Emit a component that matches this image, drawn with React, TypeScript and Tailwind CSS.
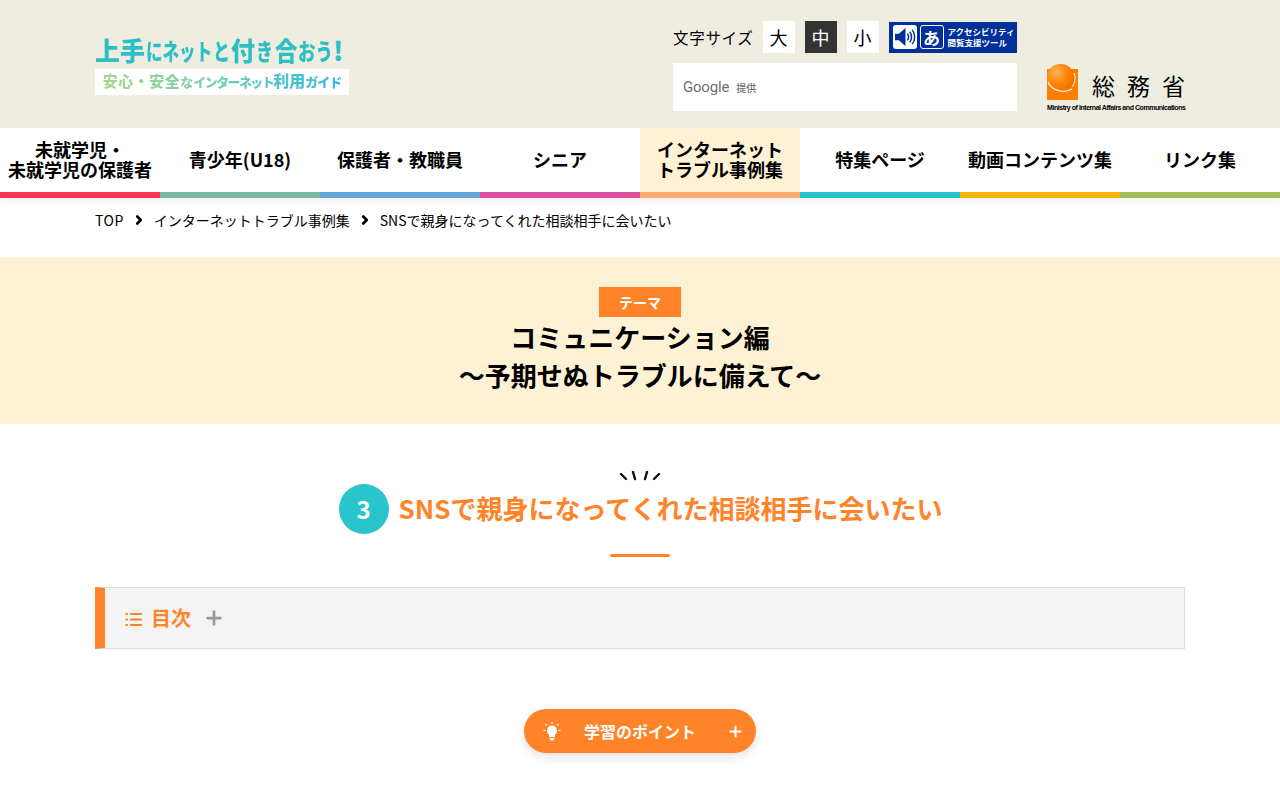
import React from 'react';
import { ChevronRight, Plus } from 'lucide-react';

const navItems = [
  { label: ['未就学児・', '未就学児の保護者'], border: 'border-[#ff3355]', bg: 'bg-white' },
  { label: ['青少年(U18)'], border: 'border-[#78b9a4]', bg: 'bg-white' },
  { label: ['保護者・教職員'], border: 'border-[#63a6dc]', bg: 'bg-white' },
  { label: ['シニア'], border: 'border-[#dc4f9d]', bg: 'bg-white' },
  { label: ['インターネット', 'トラブル事例集'], border: 'border-[#ffab6b]', bg: 'bg-[#fff1d3]' },
  { label: ['特集ページ'], border: 'border-[#27c3cb]', bg: 'bg-white' },
  { label: ['動画コンテンツ集'], border: 'border-[#f6b500]', bg: 'bg-white' },
  { label: ['リンク集'], border: 'border-[#9fbf5a]', bg: 'bg-white' },
];

// the logo lettering is condensed, so each run is squeezed into a set width
const Squeezed = ({ box, inner, children }: { box: string; inner: string; children: React.ReactNode }) => (
  <span className={`inline-block shrink-0 ${box}`}>
    <span className={`inline-block origin-left whitespace-nowrap ${inner}`}>{children}</span>
  </span>
);

const Logo = () => (
  <div className="w-[254px] mt-[6px]">
    <div className="h-[32px] mb-[3px] leading-[32px] font-black text-[#2cc0c6] flex">
      <Squeezed box="w-[51px]" inner="text-[26px] scale-x-[0.96]">上手</Squeezed>
      <Squeezed box="w-[67px]" inner="text-[23px] scale-x-[0.72]">にネット</Squeezed>
      <Squeezed box="w-[18px]" inner="text-[23px] scale-x-[0.74]">と</Squeezed>
      <Squeezed box="w-[25px]" inner="text-[26px] scale-x-[0.92]">付</Squeezed>
      <Squeezed box="w-[19px]" inner="text-[23px] scale-x-[0.74]">き</Squeezed>
      <Squeezed box="w-[23px]" inner="text-[26px] scale-x-[0.86]">合</Squeezed>
      <Squeezed box="w-[35px]" inner="text-[23px] scale-x-[0.76]">おう</Squeezed>
      <Squeezed box="w-[9px]" inner="text-[26px]">!</Squeezed>
    </div>
    <div className="h-[26px] bg-white leading-[23px] font-black text-center whitespace-nowrap">
      <span className="bg-gradient-to-r from-[#a8d68e] via-[#6fcdb0] to-[#2fb6e8] bg-clip-text text-transparent">
        <span className="text-[15px] tracking-[0.5px]">安心・安全</span>
        <span className="text-[13px]">な</span>
        <span className="text-[13px] tracking-[-1.6px]">インターネット</span>
        <span className="text-[16px]">利用</span>
        <span className="text-[13px] tracking-[-1px]">ガイド</span>
      </span>
    </div>
  </div>
);

const SizeButton = ({ label, active }: { label: string; active?: boolean }) => (
  <div className={`w-8 h-8 flex items-center justify-center text-lg ${active ? 'bg-[#333333] text-white' : 'bg-white text-black'}`}>
    {label}
  </div>
);

const AccessibilityBadge = () => (
  <div className="ml-[10px] w-[128px] h-[31px] bg-[#00309a] flex items-center gap-[3px] pl-[4px]">
    <div className="w-[24px] h-[24px] bg-white rounded-[3px] flex items-center justify-center">
      <svg width="22" height="20" viewBox="0 0 23 21">
        <path d="M1 7h4l7-6v19l-7-6H1z" fill="#00309a" />
        <path d="M14 7c1.500 2 1.500 5 0 7M16.500 5c2.500 3 2.500 8 0 11M19 3c3.500 4 3.500 11 0 15" fill="none" stroke="#00309a" strokeWidth="1.500" />
      </svg>
    </div>
    <div className="w-[24px] h-[24px] border-[1.5px] border-white rounded-[3px] flex items-center justify-center text-white text-[17px] leading-none font-bold">
      あ
    </div>
    <div className="ml-[1px] text-white text-[8.500px] leading-[11px] font-bold whitespace-nowrap">
      アクセシビリティ
      <br />
      閲覧支援ツール
    </div>
  </div>
);

const SearchBox = () => (
  <div className="mt-[10px] w-[344px] h-[48px] bg-white flex items-center pl-[10px] gap-[7px]">
    <span className="text-[#6f6f6f] text-[15px] tracking-[-0.2px] font-['Roboto',sans-serif]">Google</span>
    <span className="text-[#6f6f6f] text-[10px] font-medium">提供</span>
  </div>
);

const MinistryLogo = () => (
  <div className="w-[138px] mt-[64px]">
    <div className="flex items-start h-[39px]">
      <svg width="32" height="37" viewBox="0 0 32 37" className="shrink-0">
        <defs>
          <radialGradient id="ministryBall" cx="0.35" cy="0.3" r="0.75">
            <stop offset="0" stopColor="#ffb45a" />
            <stop offset="0.6" stopColor="#ff8000" />
            <stop offset="1" stopColor="#ee7000" />
          </radialGradient>
        </defs>
        <rect x="0" y="5" width="31" height="31" fill="#ff8000" />
        <circle cx="13.500" cy="14" r="14" fill="url(#ministryBall)" />
        <path d="M1 18c3 8 15 12 24 7" fill="none" stroke="#fff" strokeWidth="1.200" />
        <path d="M27 9c2 5 1 10-2 14" fill="none" stroke="#fff" strokeWidth="1" />
      </svg>
      <div className="ml-[13px] mt-[7px] text-[23px] leading-[28px] tracking-[12px] text-black whitespace-nowrap">総務省</div>
    </div>
    <div className="text-[7px] leading-[9px] font-bold text-black whitespace-nowrap tracking-[-0.45px] font-['Liberation_Sans',sans-serif]">
      Ministry of Internal Affairs and Communications
    </div>
  </div>
);

const Header = () => (
  <header className="h-[128px] bg-[#efece0] px-[95px] flex">
    <div className="pt-[28px]">
      <Logo />
    </div>
    <div className="ml-[324px] mt-[21px] w-[344px]">
      <div className="flex items-center">
        <span className="pt-[2px] text-[15.500px] tracking-[0.7px] text-black mr-[9px] whitespace-nowrap">文字サイズ</span>
        <div className="flex gap-[10px]">
          <SizeButton label="大" />
          <SizeButton label="中" active />
          <SizeButton label="小" />
        </div>
        <AccessibilityBadge />
      </div>
      <SearchBox />
    </div>
    <div className="ml-[30px]">
      <MinistryLogo />
    </div>
  </header>
);

const Nav = () => (
  <nav className="grid grid-cols-8 h-[70px] relative shadow-[0_4px_8px_rgba(0,0,0,0.05)]">
    {navItems.map((item) => (
      <div
        key={item.label.join('')}
        className={`flex items-center justify-center text-center pb-[2px] border-b-[6px] text-[18px] leading-[20px] font-bold text-black whitespace-nowrap ${item.border} ${item.bg}`}
      >
        <span>
          {item.label[0]}
          {item.label[1] && <br />}
          {item.label[1]}
        </span>
      </div>
    ))}
  </nav>
);

const Crumb = () => <ChevronRight className="w-[14px] h-[14px] text-black -mx-[2px] mt-[5px]" strokeWidth={4.5} />;

const Breadcrumb = () => (
  <div className="h-[59px] px-[95px] pt-[10px] flex items-start gap-[10px] text-sm leading-[24px] text-black">
    <span className="tracking-[0.5px]">TOP</span>
    <Crumb />
    <span>インターネットトラブル事例集</span>
    <Crumb />
    <span>SNSで親身になってくれた相談相手に会いたい</span>
  </div>
);

const ThemeBand = () => (
  <section className="h-[167px] bg-[#fff1d3] pt-[30px] flex flex-col items-center">
    <div className="w-[82px] h-[30px] bg-[#ff8429] text-white text-sm font-bold flex items-center justify-center">テーマ</div>
    <h1 className="mt-[1px] text-[26px] leading-[38px] font-bold text-black text-center">
      コミュニケーション編
      <br />
      ～予期せぬトラブルに備えて～
    </h1>
  </section>
);

const Heading = () => (
  <section className="flex flex-col items-center pt-[47px]">
    <svg width="42" height="12" viewBox="0 0 42 12">
      <path d="M2 3l5 5M14 1l2 7M28 1l-2 7M40 3l-5 5" stroke="#111" strokeWidth="2.400" strokeLinecap="round" fill="none" />
    </svg>
    <div className="mt-[1px] pl-[1px] flex items-center gap-[10px] h-[50px]">
      <div className="w-[50px] h-[50px] rounded-full bg-[#29c4cc] text-white text-[24px] font-bold flex items-center justify-center">3</div>
      <h2 className="pb-[4px] text-[26px] font-bold text-[#ff8429] whitespace-nowrap">SNSで親身になってくれた相談相手に会いたい</h2>
    </div>
    <div className="mt-[20px] w-[60px] h-[3px] rounded-full bg-[#ff8429]" />
  </section>
);

const Toc = () => (
  <div className="mx-[95px] mt-[30px] h-[62px] bg-[#f4f4f4] border border-[#dddddd] border-l-[10px] border-l-[#ff8429] flex items-center pl-[20px]">
    <svg width="17" height="15" viewBox="0 0 17 15" className="mt-[3px]">
      <path d="M5 2h12M5 7.500h12M5 13h12" stroke="#ff8429" strokeWidth="2" />
      <path d="M0.500 2h2.500M0.500 7.500h2.500M0.500 13h2.500" stroke="#ff8429" strokeWidth="2" />
    </svg>
    <span className="ml-[9px] text-[20px] font-bold text-[#ff8429]">目次</span>
    <Plus className="ml-[12px] w-[22px] h-[22px] text-[#a09a94]" strokeWidth={3} />
  </div>
);

const PointButton = () => (
  <div className="mt-[60px] flex justify-center">
    <div className="w-[232px] h-[44px] rounded-full bg-[#ff8429] shadow-[0_4px_10px_rgba(0,0,0,0.12)] flex items-center pl-[19px] pr-[12px] text-white">
      <svg width="18" height="19" viewBox="0 0 18 19" className="shrink-0">
        <path d="M9 3.500a5 5 0 0 0-3 9V15h6v-2.500a5 5 0 0 0-3-9zM6.500 16h5l-1 2.500h-3z" fill="#fff" />
        <path d="M9 0v2M2.500 2l1.500 1.500M15.500 2L14 3.500M0.500 8.500h2M15.500 8.500h2" stroke="#fff" strokeWidth="1.200" />
      </svg>
      <span className="ml-[23px] text-[16px] font-bold whitespace-nowrap">学習のポイント</span>
      <Plus className="ml-auto w-[17px] h-[17px]" strokeWidth={3} />
    </div>
  </div>
);

export default function App() {
  return (
    <div className="h-[800px] overflow-hidden bg-white font-['Noto_Sans_CJK_JP','Noto_Sans',sans-serif]">
      <Header />
      <Nav />
      <Breadcrumb />
      <ThemeBand />
      <Heading />
      <Toc />
      <PointButton />
    </div>
  );
}
